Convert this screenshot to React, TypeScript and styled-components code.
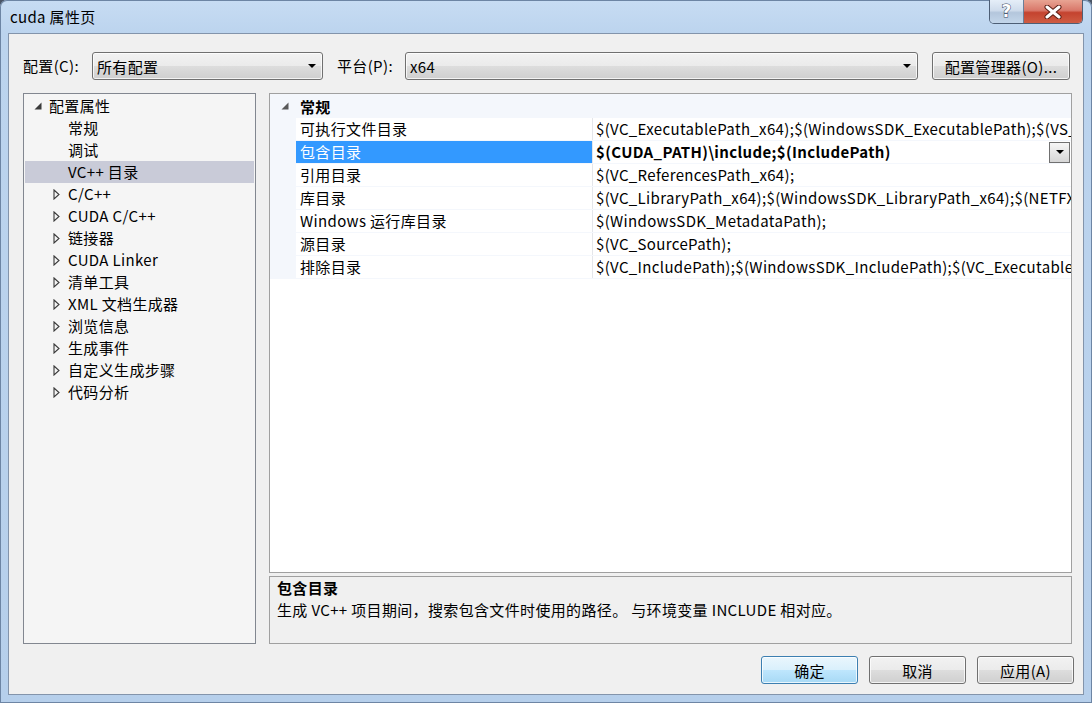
import React from "react";
import styled, { createGlobalStyle, css } from "styled-components";

const FONT = `"Noto Sans CJK SC", "Noto Sans", sans-serif`;

const GlobalStyle = createGlobalStyle`
  html, body { margin: 0; padding: 0; background: #4a5566; }
  body { font-family: ${FONT}; font-size: 15px; color: #000; letter-spacing: 0.35px; }
  * { box-sizing: border-box; }
`;

const Window = styled.div`
  width: 1092px;
  height: 703px;
  display: flex;
  flex-direction: column;
  background: linear-gradient(180deg, #c7dcf3 0px, #bcd4ee 33px, #b6cfeb 100%);
  border-radius: 7px 7px 0 0;
  box-shadow: inset 0 0 0 1px #6d85a4;
  overflow: hidden;
`;

const TitleBar = styled.div`
  height: 33px;
  display: flex;
  align-items: flex-start;
  justify-content: space-between;
  padding: 0 9px 0 10px;
  flex-shrink: 0;
`;

const Title = styled.div`
  font-size: 15px;
  line-height: 33px;
  color: #000;
`;

const Caption = styled.div`
  display: flex;
  height: 24px;
  border: 1px solid #4d5e75;
  border-top: none;
  border-radius: 0 0 5px 5px;
  overflow: hidden;
`;

const CapBtn = styled.div<{ $w: number; $close?: boolean }>`
  width: ${(p) => p.$w}px;
  height: 100%;
  display: flex;
  align-items: center;
  justify-content: center;
  ${(p) =>
    p.$close
      ? css`
          background: linear-gradient(180deg, #e8a493 0%, #d9786a 45%, #c4432f 55%, #cf5c43 100%);
        `
      : css`
          border-right: 1px solid #6b7f99;
          background: linear-gradient(180deg, #e5eef8 0%, #cfdcec 45%, #b4c6dc 55%, #c3d6ea 100%);
        `}
`;

const HelpGlyph = styled.span`
  font-family: "DejaVu Sans", sans-serif;
  font-weight: bold;
  font-size: 17px;
  line-height: 1;
  color: #fff;
  -webkit-text-stroke: 1px #36465c;
  paint-order: stroke fill;
`;

const Client = styled.div`
  flex: 1;
  min-height: 0;
  margin: 0 8px 8px 8px;
  background: #f0f0f0;
  border: 1px solid #8394ab;
  display: flex;
  flex-direction: column;
  padding: 0 11px 0 14px;
`;

const ConfigRow = styled.div`
  margin-top: 18px;
  height: 28px;
  display: flex;
  align-items: center;
  padding-right: 2px;
`;

const Label = styled.span<{ $w: number }>`
  width: ${(p) => p.$w}px;
  flex-shrink: 0;
  line-height: 28px;
`;

const buttonFace = css`
  border: 1px solid #707070;
  border-radius: 3px;
  background: linear-gradient(180deg, #f2f2f2 0%, #ebebeb 50%, #dddddd 51%, #cfcfcf 100%);
  box-shadow: inset 0 0 0 1px rgba(255, 255, 255, 0.75);
`;

const Combo = styled.div<{ $w?: number }>`
  ${buttonFace}
  ${(p) => (p.$w ? `width: ${p.$w}px; flex-shrink: 0;` : `flex: 1; min-width: 0;`)}
  height: 28px;
  display: flex;
  align-items: center;
  justify-content: space-between;
  padding: 0 6px 0 4px;
  margin-right: 14px;
`;

const DownTri = styled.span`
  width: 0;
  height: 0;
  border-left: 4px solid transparent;
  border-right: 4px solid transparent;
  border-top: 4px solid #000;
`;

const Button = styled.div<{ $w: number; $default?: boolean }>`
  ${buttonFace}
  width: ${(p) => p.$w}px;
  height: 28px;
  flex-shrink: 0;
  display: flex;
  align-items: center;
  justify-content: center;
  ${(p) =>
    p.$default &&
    css`
      border-color: #3c7fb1;
      background: linear-gradient(180deg, #eaf6fd 0%, #d9f0fc 50%, #bee6fd 51%, #a7d9f5 100%);
    `}
`;

const Main = styled.div`
  margin-top: 13px;
  height: 551px;
  flex-shrink: 0;
  display: flex;
  gap: 13px;
  min-width: 0;
`;

const Tree = styled.div`
  width: 233px;
  flex-shrink: 0;
  border: 1px solid #828790;
  background: #f5f5f5;
  padding: 1px;
`;

const TreeRow = styled.div<{ $level: number; $selected?: boolean }>`
  height: 22px;
  display: flex;
  align-items: center;
  padding-left: ${(p) => (p.$level === 0 ? 9 : 28)}px;
  background: ${(p) => (p.$selected ? "#c9cbd8" : "transparent")};
  white-space: nowrap;
`;

const TreeText = styled.span`
  position: relative;
  top: -1px;
`;

const ArrowSlot = styled.span`
  width: 15px;
  flex-shrink: 0;
  display: flex;
  align-items: center;
`;

const RightCol = styled.div`
  flex: 1;
  min-width: 0;
  display: flex;
  flex-direction: column;
  gap: 3px;
`;

const Grid = styled.div`
  flex: 1;
  min-height: 0;
  min-width: 0;
  border: 1px solid #a0a0a0;
  background: #fff;
  overflow: hidden;
`;

const LINE = "#f4f7fc";

const CategoryRow = styled.div`
  height: 24px;
  display: flex;
  align-items: center;
  background: ${LINE};
  font-weight: bold;
  padding-left: 11px;
`;

const CatArrow = styled.span`
  width: 19px;
  display: flex;
  align-items: center;
`;

const PropRow = styled.div`
  height: 23px;
  display: flex;
  border-bottom: 1px solid ${LINE};
`;

const Gutter = styled.div`
  width: 26px;
  flex-shrink: 0;
  background: ${LINE};
`;

const NameCell = styled.div<{ $selected?: boolean }>`
  width: 297px;
  flex-shrink: 0;
  padding-left: 4px;
  line-height: 22px;
  border-right: 1px solid #e4e6ea;
  white-space: nowrap;
  overflow: hidden;
  ${(p) =>
    p.$selected &&
    css`
      background: #3399ff;
      color: #fff;
    `}
`;

const ValueCell = styled.div<{ $bold?: boolean }>`
  flex: 1;
  min-width: 0;
  display: flex;
  align-items: center;
  padding-left: 3px;
  white-space: nowrap;
  overflow: hidden;
  font-weight: ${(p) => (p.$bold ? "bold" : "normal")};
`;

const ValueText = styled.span`
  flex: 1;
  min-width: 0;
  overflow: hidden;
  line-height: 22px;
`;

const DropBtn = styled.div`
  width: 21px;
  height: 21px;
  flex-shrink: 0;
  margin-right: 1px;
  border: 1px solid #707070;
  background: linear-gradient(180deg, #f6f6f6 0%, #e6e6e6 50%, #d6d6d6 100%);
  display: flex;
  align-items: center;
  justify-content: center;
`;

const Desc = styled.div`
  height: 68px;
  flex-shrink: 0;
  border: 1px solid #a0a0a0;
  background: #f0f0f0;
  padding: 0 7px;
  line-height: 22px;
`;

const DescTitle = styled.div`
  font-weight: bold;
`;

const Footer = styled.div`
  margin-top: 12px;
  margin-right: -2px;
  display: flex;
  justify-content: flex-end;
  gap: 11px;
`;

const ExpandedArrow = ({ color = "#3b3b3b" }: { color?: string }) => (
  <svg width="8" height="8" viewBox="0 0 8 8">
    <path d="M7.5 0.5 L7.5 7.5 L0.5 7.5 Z" fill={color} />
  </svg>
);

const CollapsedArrow = () => (
  <svg width="7" height="11" viewBox="0 0 7 11">
    <path d="M1 1 L6 5.5 L1 10 Z" fill="none" stroke="#3a3a3a" strokeWidth="1.1" />
  </svg>
);

const CloseX = () => (
  <svg width="18" height="14" viewBox="0 0 18 14">
    <path d="M3 2 L15 12 M15 2 L3 12" stroke="#5a1e14" strokeWidth="5" strokeLinecap="round" />
    <path d="M3 2 L15 12 M15 2 L3 12" stroke="#ffffff" strokeWidth="3" strokeLinecap="round" />
  </svg>
);

type TreeItem = { label: string; level: number; state?: "open" | "closed"; selected?: boolean };

const treeItems: TreeItem[] = [
  { label: "配置属性", level: 0, state: "open" },
  { label: "常规", level: 1 },
  { label: "调试", level: 1 },
  { label: "VC++ 目录", level: 1, selected: true },
  { label: "C/C++", level: 1, state: "closed" },
  { label: "CUDA C/C++", level: 1, state: "closed" },
  { label: "链接器", level: 1, state: "closed" },
  { label: "CUDA Linker", level: 1, state: "closed" },
  { label: "清单工具", level: 1, state: "closed" },
  { label: "XML 文档生成器", level: 1, state: "closed" },
  { label: "浏览信息", level: 1, state: "closed" },
  { label: "生成事件", level: 1, state: "closed" },
  { label: "自定义生成步骤", level: 1, state: "closed" },
  { label: "代码分析", level: 1, state: "closed" },
];

type Prop = { name: string; value: string; selected?: boolean };

const props: Prop[] = [
  {
    name: "可执行文件目录",
    value:
      "$(VC_ExecutablePath_x64);$(WindowsSDK_ExecutablePath);$(VS_ExecutablePath);$(MSBuild_ExecutablePath);$(FxCopDir);$(PATH);",
  },
  { name: "包含目录", value: "$(CUDA_PATH)\\include;$(IncludePath)", selected: true },
  { name: "引用目录", value: "$(VC_ReferencesPath_x64);" },
  {
    name: "库目录",
    value: "$(VC_LibraryPath_x64);$(WindowsSDK_LibraryPath_x64);$(NETFXKitsDir)Lib\\um\\x64",
  },
  { name: "Windows 运行库目录", value: "$(WindowsSDK_MetadataPath);" },
  { name: "源目录", value: "$(VC_SourcePath);" },
  {
    name: "排除目录",
    value: "$(VC_IncludePath);$(WindowsSDK_IncludePath);$(VC_ExecutablePath_x64);$(VC_LibraryPath_x64)",
  },
];

export default function App() {
  return (
    <>
      <GlobalStyle />
      <Window>
        <TitleBar>
          <Title>cuda 属性页</Title>
          <Caption>
            <CapBtn $w={34}>
              <HelpGlyph>?</HelpGlyph>
            </CapBtn>
            <CapBtn $w={58} $close>
              <CloseX />
            </CapBtn>
          </Caption>
        </TitleBar>
        <Client>
          <ConfigRow>
            <Label $w={69}>配置(C):</Label>
            <Combo $w={231}>
              <span>所有配置</span>
              <DownTri />
            </Combo>
            <Label $w={68}>平台(P):</Label>
            <Combo>
              <span>x64</span>
              <DownTri />
            </Combo>
            <Button $w={138}>配置管理器(O)...</Button>
          </ConfigRow>
          <Main>
            <Tree>
              {treeItems.map((t) => (
                <TreeRow key={t.label} $level={t.level} $selected={t.selected}>
                  <ArrowSlot>
                    {t.state === "open" && <ExpandedArrow />}
                    {t.state === "closed" && <CollapsedArrow />}
                  </ArrowSlot>
                  <TreeText>{t.label}</TreeText>
                </TreeRow>
              ))}
            </Tree>
            <RightCol>
              <Grid>
                <CategoryRow>
                  <CatArrow>
                    <ExpandedArrow color="#595959" />
                  </CatArrow>
                  常规
                </CategoryRow>
                {props.map((p) => (
                  <PropRow key={p.name}>
                    <Gutter />
                    <NameCell $selected={p.selected}>{p.name}</NameCell>
                    <ValueCell $bold={p.selected}>
                      <ValueText>{p.value}</ValueText>
                      {p.selected && (
                        <DropBtn>
                          <DownTri />
                        </DropBtn>
                      )}
                    </ValueCell>
                  </PropRow>
                ))}
              </Grid>
              <Desc>
                <DescTitle>包含目录</DescTitle>
                <div>生成 VC++ 项目期间，搜索包含文件时使用的路径。 与环境变量 INCLUDE 相对应。</div>
              </Desc>
            </RightCol>
          </Main>
          <Footer>
            <Button $w={97} $default>
              确定
            </Button>
            <Button $w={97}>取消</Button>
            <Button $w={97}>应用(A)</Button>
          </Footer>
        </Client>
      </Window>
    </>
  );
}
